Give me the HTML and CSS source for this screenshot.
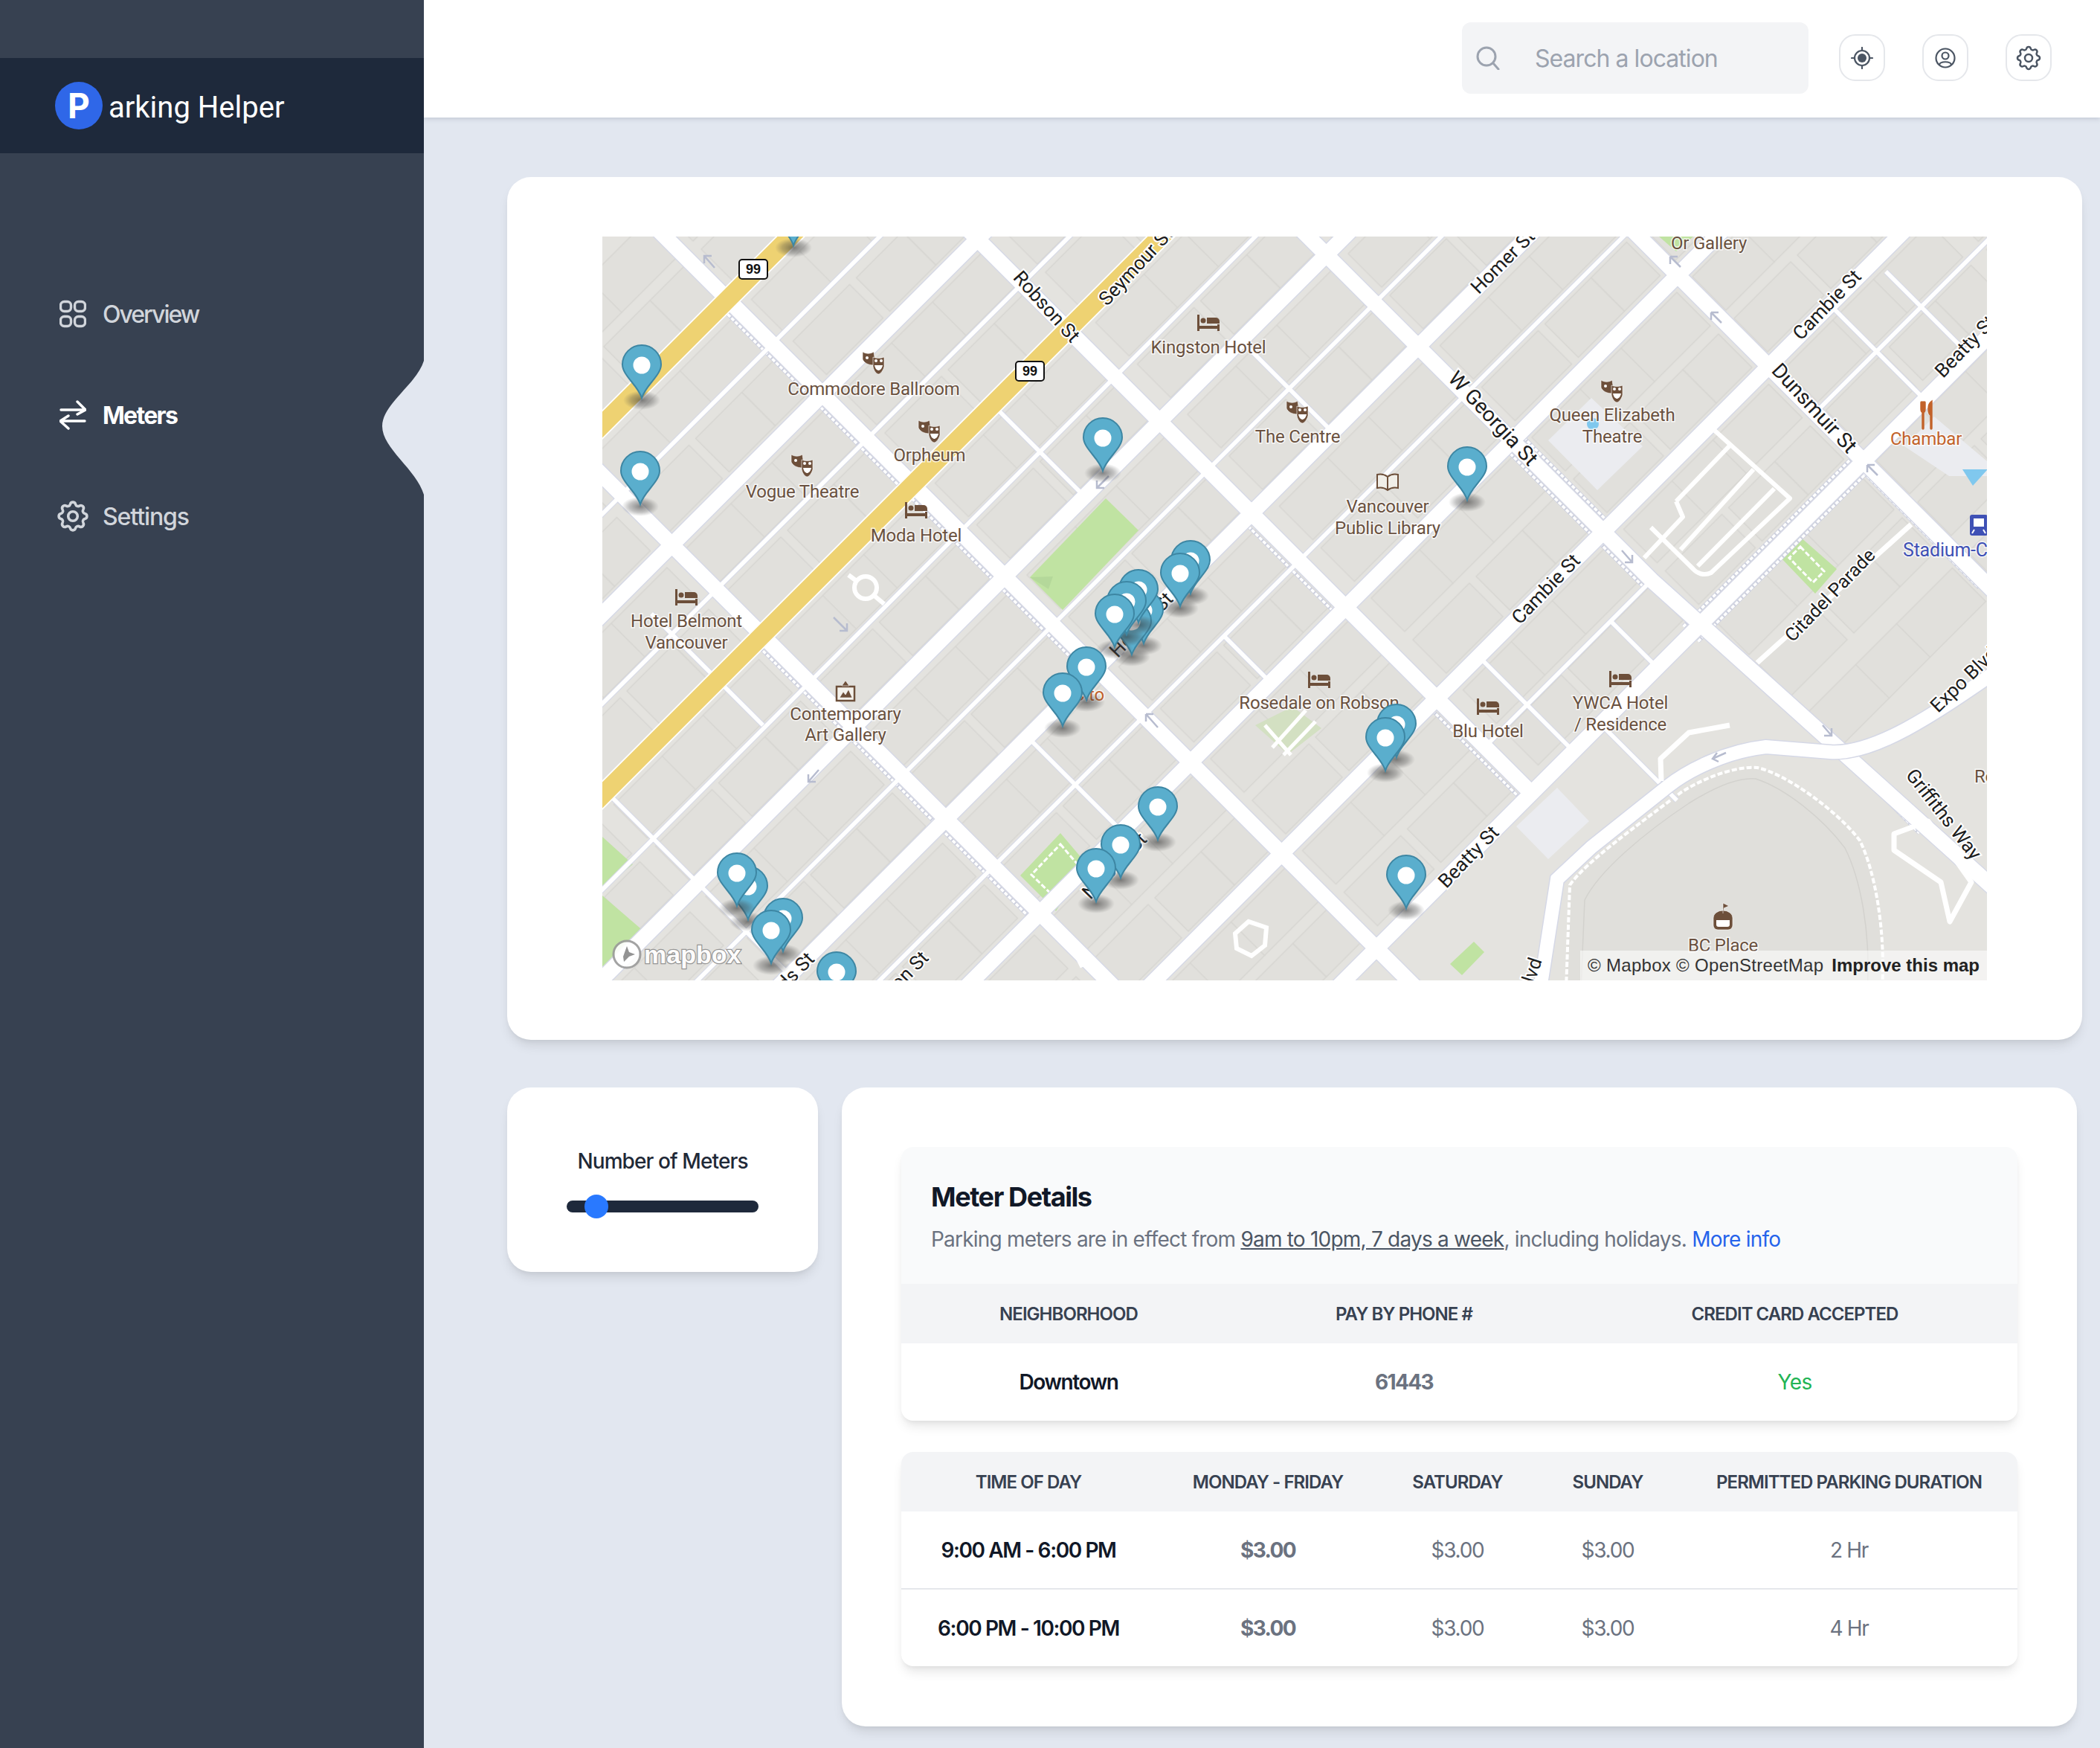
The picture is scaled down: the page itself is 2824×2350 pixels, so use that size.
FILE: index.html
```html
<!DOCTYPE html>
<html lang="en">
<head>
<meta charset="utf-8">
<title>Parking Helper</title>
<link rel="stylesheet" href="styles.css">
</head>
<body>
<div class="app">
  <aside class="sidebar">
    <div class="brand"><span class="brand-mark">P</span><span class="brand-text">arking Helper</span></div>
    <nav class="nav">
      <a class="nav-item overview">
        <svg class="nav-icon" viewBox="0 0 36 36"><rect x="1.5" y="1.5" width="14" height="13" rx="5"/><rect x="20.5" y="1.5" width="14" height="13" rx="5"/><rect x="1.5" y="21.5" width="14" height="13" rx="5"/><rect x="20.5" y="21.5" width="14" height="13" rx="5"/></svg>
        <span>Overview</span>
      </a>
      <a class="nav-item active">
        <svg class="nav-icon" viewBox="0 0 36 40"><path d="M2 13H34M24 2L35 13L24 19"/><path d="M34 28H2M12 21L1 28L12 38"/></svg>
        <span>Meters</span>
      </a>
      <a class="nav-item">
        <svg class="nav-icon gear" viewBox="0 0 24 24"><path d="M10.325 4.317c.426-1.756 2.924-1.756 3.35 0a1.724 1.724 0 002.573 1.066c1.543-.94 3.31.826 2.37 2.37a1.724 1.724 0 001.065 2.572c1.756.426 1.756 2.924 0 3.35a1.724 1.724 0 00-1.066 2.573c.94 1.543-.826 3.31-2.37 2.37a1.724 1.724 0 00-2.572 1.065c-.426 1.756-2.924 1.756-3.35 0a1.724 1.724 0 00-2.573-1.066c-1.543.94-3.31-.826-2.37-2.37a1.724 1.724 0 00-1.065-2.572c-1.756-.426-1.756-2.924 0-3.35a1.724 1.724 0 001.066-2.573c-.94-1.543.826-3.31 2.37-2.37.996.608 2.296.07 2.572-1.065z"/><circle cx="12" cy="12" r="3"/></svg>
        <span>Settings</span>
      </a>
    </nav>
    <svg class="notch" viewBox="0 0 56 180"><path d="M56 0C46 32 0 58 0 88C0 118 46 146 56 180Z"/></svg>
  </aside>

  <div class="main">
    <header class="topbar">
      <div class="search">
        <svg class="search-icon" viewBox="0 0 32 32"><circle cx="14" cy="14" r="12"/><path d="M23 23L30 31"/></svg>
        <span class="search-text">Search a location</span>
      </div>
      <button class="icon-btn">
        <svg class="top-icon" viewBox="0 0 30 30"><circle cx="15" cy="15" r="10"/><circle class="solid" cx="15" cy="15" r="6"/><path d="M15 1V5M15 25V29M1 15H5M25 15H29"/></svg>
      </button>
      <button class="icon-btn">
        <svg class="top-icon" viewBox="0 0 30 30"><circle cx="15" cy="15" r="12.5"/><circle cx="15" cy="12" r="4.5"/><path d="M7 24C8 19 22 19 23 24"/></svg>
      </button>
      <button class="icon-btn">
        <svg class="top-icon top-gear" viewBox="0 0 24 24"><path d="M10.325 4.317c.426-1.756 2.924-1.756 3.35 0a1.724 1.724 0 002.573 1.066c1.543-.94 3.31.826 2.37 2.37a1.724 1.724 0 001.065 2.572c1.756.426 1.756 2.924 0 3.35a1.724 1.724 0 00-1.066 2.573c.94 1.543-.826 3.31-2.37 2.37a1.724 1.724 0 00-2.572 1.065c-.426 1.756-2.924 1.756-3.35 0a1.724 1.724 0 00-2.573-1.066c-1.543.94-3.31-.826-2.37-2.37a1.724 1.724 0 00-1.065-2.572c-1.756-.426-1.756-2.924 0-3.35a1.724 1.724 0 001.066-2.573c-.94-1.543.826-3.31 2.37-2.37.996.608 2.296.07 2.572-1.065z"/><circle cx="12" cy="12" r="3"/></svg>
      </button>
    </header>

    <main class="content">
      <section class="card map-card">
        <div class="map">
          <svg class="map-svg" viewBox="809 318 1862 1000">
            <defs>
              <pattern id="parcels" width="247" height="432" patternUnits="userSpaceOnUse" patternTransform="translate(1635 -155)">
                <rect class="bldg" x="24" y="22" width="90" height="150"/>
                <rect class="bldg" x="24" y="172" width="90" height="110"/>
                <rect class="bldg" x="24" y="282" width="90" height="130"/>
                <rect class="bldg" x="136" y="22" width="90" height="96"/>
                <rect class="bldg" x="136" y="118" width="90" height="124"/>
                <rect class="bldg" x="136" y="260" width="90" height="152"/>
              </pattern>
              <radialGradient id="shadow"><stop offset="0" stop-color="#333" stop-opacity=".6"/><stop offset=".6" stop-color="#444" stop-opacity=".32"/><stop offset="1" stop-color="#555" stop-opacity="0"/></radialGradient>
              <g id="pin">
                <ellipse cx="0" cy="3" rx="25" ry="13" fill="url(#shadow)"/>
                <path class="pin-body" d="M0 0C-5 -17 -26 -30 -26 -45A26 26 0 0 1 26 -45C26 -30 5 -17 0 0Z"/>
                <circle class="pin-hole" cx="0" cy="-44" r="11.5"/>
              </g>
              <g id="bed"><path class="glyph-plain" d="M-15 -11h3v15h24v-2h3v9h-3v-3h-24v3h-3z"/><circle class="glyph-plain" cx="-7" cy="-3" r="3.5"/><path class="glyph-plain" d="M-2 -7h12a5 5 0 015 5v3h-17z"/></g>
              <g id="masks"><path class="glyph" d="M-15 -15c5 3 10 3 15 0l1 7-1 11c-7 0-13-3-15-8z"/><path class="glyph" d="M-1 -8c5 2 10 2 15 0v13c-2 7-6 10-7.500 10c-2 0-6-3-7.500-10z"/><circle class="glyph-hole" cx="-9" cy="-7" r="2"/><circle class="glyph-hole" cx="3" cy="-3" r="2"/><circle class="glyph-hole" cx="10" cy="-3" r="2"/><path class="glyph-hole" d="M1 3h11c-1 5-4 7-5.500 7c-2 0-4.500-2-5.500-7z"/></g>
              <g id="book"><path class="book" d="M0 -7C-5 -11 -10 -11 -14 -10V8C-10 7 -5 7 0 11C5 7 10 7 14 8V-10C10 -11 5 -11 0 -7V11"/></g>
              <g id="art"><path class="art-frame" d="M-12 -6L0 -6L12 -6V13H-12Z"/><path class="glyph" d="M-5 -7L0 -14L5 -7ZM-8 9L-3 1L0 5L4 -2L9 9Z"/></g>
              <g id="fork"><path class="fork" d="M-7 -17V-8C-7 -3 -3 -3 -3 -8V-17M-5 -17V18M6 18V-17C2 -14 2 -3 6 0"/></g>
              <g id="dome"><path class="glyph" d="M-13 -2a13 10 0 0126 0v10a6 6 0 01-6 6h-14a6 6 0 01-6-6z"/><path class="glyph" d="M0 -8V-22L8 -18L1 -15"/><path class="glyph-hole" d="M-9 1h18v6a3 3 0 01-3 3h-12a3 3 0 01-3-3z"/></g>
            </defs>

            <rect class="land" x="809" y="318" width="1862" height="1000"/>

            <g transform="matrix(.5 .5 -.5 .5 0 0)">
              <rect x="1127" y="-2353" width="2862" height="2862" fill="url(#parcels)"/>
              <rect class="land" x="3135" y="-1440" width="1000" height="1500"/>
              <rect class="land" x="3480" y="-2400" width="600" height="1100"/>
            </g>

            <polygon class="plaza" points="2139,535 2208,600 2147,659 2081,592"/>
            <polygon class="plaza" points="2093,1059 2136,1104 2081,1155 2038,1111"/>
            <polygon class="plaza" points="2560,600 2600,560 2671,620 2671,640 2620,640"/>
            <polygon class="water" points="2638,631 2672,631 2652,653"/>
            <circle class="water" cx="2141" cy="570" r="8"/>
            <polygon class="park" points="1486,670 1530,713 1428,820 1384,776"/>
            <polygon class="park-dark" points="1384,776 1415,775 1409,792"/>
            <polygon class="park" points="1425,1120 1459,1160 1419,1225 1371,1177"/>
            <polygon class="park-dash" points="1425,1135 1448,1162 1419,1208 1386,1176"/>
            <polygon class="park" points="809,1125 850,1162 809,1196"/>
            <polygon class="park" points="809,1204 867,1254 819,1305 809,1305"/>
            <polygon class="park" points="1981,1266 1995,1280 1965,1311 1949,1296"/>
            <polygon class="park" points="2420,722 2469,765 2440,798 2394,750"/>
            <polygon class="park-dash" points="2420,735 2452,768 2437,783 2405,750"/>
            <polygon class="park-fade" points="1737,950 1776,979 1731,1014 1687,975"/>
            <path class="park-stripes" d="M1755 955L1710 1005M1768 970L1725 1015M1700 975L1735 1015"/>
            <polygon class="park" points="2230,318 2276,318 2253,338"/>

            <path class="stadium" d="M2105 1330L2110 1190C2130 1160 2200 1110 2260 1065C2300 1040 2340 1030 2362 1032C2400 1040 2470 1090 2500 1130C2520 1170 2535 1250 2530 1330Z"/>
            <path class="stadium-inner" d="M2125 1330L2130 1210C2150 1170 2210 1120 2270 1080C2310 1055 2340 1045 2360 1047C2400 1060 2450 1100 2480 1140C2500 1180 2515 1250 2510 1330"/>

            <g transform="matrix(.5 .5 -.5 .5 0 0)">
              <defs>
                <path id="thin" d="M1500 -2400V600M1755 -2400V600M2005 -2400V600M2255 -2400V600M2500 -2400V600M3000 -1440V-1000M2995 -2400V-1885M1860 250H2400M1700 -50H2000M2372 -390H2625M1878 -790H2125M2125 -1210H2372M2870 -2050H3125M2900 -2170H3125M2870 -1105H3125M3125 -1178H3330M3000 -1330H3125M1127 60H1380M2500 -790H2625"/>
                <path id="major" d="M1635 -2400V600M2125 -2400V600M2372 -2400V600M2625 -2400V600M2870 -2400V600M3125 -2400V600M1000 -170H4000M1000 -575H4000M1000 -992H3125M1000 -1440H3000L3950 -1490M1000 -1885H3560"/>
                <path id="hwy" d="M1380 -2400V600M1878 -2400V600"/>
                <path id="walk" d="M1400 -555H1630M1640 -555H1870M1885 -555H2110M2130 -555H2360M2640 -1420H2860M2880 -1420H3000M2385 -970H2615M2880 -970H3115M1890 -150H2115M2135 -150H2360M2380 -150H2610M2145 -1870H2360M3140 -1870H3450M3135 -1460H3700M2863 -1460H2640M3105 -1420V-1900M3145 -1420V-1900"/>
              </defs>
              <use href="#walk" class="walk-case"/>
              <use href="#walk" class="walk"/>
              <use href="#thin" class="thin-case"/>
              <use href="#major" class="major-case"/>
              <use href="#thin" class="thin-fill"/>
              <use href="#major" class="major-fill"/>
              <use href="#hwy" class="hwy-case"/>
              <use href="#hwy" class="hwy-fill"/>
            </g>

            <path class="curve-case" d="M2070 1330L2093 1182L2139 1139L2242 1057C2270 1035 2320 1010 2374 1004L2460 1011C2520 1015 2600 960 2680 905"/>
            <path class="curve" d="M2070 1330L2093 1182L2139 1139L2242 1057C2270 1035 2320 1010 2374 1004L2460 1011C2520 1015 2600 960 2680 905"/>
            <path class="thin-xy" d="M2362 891L2569 705M2546 1121L2592 1104L2650 1186L2621 1239L2609 1186L2546 1143ZM2233 1050L2232 1020L2270 985L2325 975M1440 1270L1455 1300"/>
            <path class="thin-xy lots" d="M2305 579L2406 670L2300 770C2290 775 2280 770 2276 765L2219 709M2253 674L2328 596M2253 674L2262 695L2210 750M2259 739L2357 631M2282 761L2385 657"/>
            <path class="ring" d="M1660 1255l18-16 24 8-2 24-18 14-20-10zM1148 790a15 15 0 1030 0a15 15 0 10-30 0zM1140 773l12 9M1176 802l12 10"/>
            <g class="arrows">
              <path d="M1120 830l18 18m-10 0h10v-10"/><path d="M1490 640l-16 16m0-10v10h10"/>
              <path d="M1100 1035l-14 16m0-10v10h10"/><path d="M1540 960l16 18m-16-18h10m-10 0v10"/>
              <path d="M2245 345l14 14m-14-14h10m-10 0v10"/><path d="M2300 420l14 14m-14-14h10m-10 0v10"/>
              <path d="M2510 625l14 14m-14-14h10m-10 0v10"/><path d="M2180 740l14 16m0-10v10h-10"/>
              <path d="M2450 975l12 14m0-10v10h-10"/><path d="M2320 1012l-18 8m6-8l-6 8l8 4"/>
              <path d="M960 360l-14-16m0 10v-10h10"/>
            </g>

            <g class="labels">
              <text x="1174" y="531">Commodore Ballroom</text><use href="#masks" x="1174" y="488"/>
              <text x="1624" y="475">Kingston Hotel</text><use href="#bed" x="1624" y="434"/>
              <text x="1744" y="595">The Centre</text><use href="#masks" x="1744" y="554"/>
              <text x="1249" y="620">Orpheum</text><use href="#masks" x="1249" y="580"/>
              <text x="1078" y="669">Vogue Theatre</text><use href="#masks" x="1078" y="626"/>
              <text x="1231" y="728">Moda Hotel</text><use href="#bed" x="1231" y="686"/>
              <text x="922" y="843">Hotel Belmont</text><text x="922" y="872">Vancouver</text><use href="#bed" x="922" y="803"/>
              <text x="1136" y="968">Contemporary</text><text x="1136" y="996">Art Gallery</text><use href="#art" x="1136" y="929"/>
              <text x="1773" y="953">Rosedale on Robson</text><use href="#bed" x="1773" y="914"/>
              <text x="1865" y="689">Vancouver</text><text x="1865" y="718">Public Library</text><use href="#book" x="1865" y="648"/>
              <text x="2167" y="566">Queen Elizabeth</text><text x="2167" y="595">Theatre</text><use href="#masks" x="2167" y="526"/>
              <text class="food" x="2589" y="598">Chambar</text><use href="#fork" x="2590" y="558"/>
              <text class="transit" x="2558" y="748">Stadium-Chambar</text>
              <text x="2178" y="953">YWCA Hotel</text><text x="2178" y="982">/ Residence</text><use href="#bed" x="2178" y="913"/>
              <text x="2000" y="991">Blu Hotel</text><use href="#bed" x="2000" y="950"/>
              <text x="2316" y="1279">BC Place</text><use href="#dome" x="2316" y="1236"/>
              <text x="2297" y="335">Or Gallery</text>
              <text class="start" x="2654" y="1052">Rogers</text>
              <text class="food" x="1463" y="942">Cito</text>
            </g>
            <rect class="train" x="2648" y="692" width="24" height="28" rx="3"/>
            <path class="train-mark" d="M2654 698h12v9h-12zM2654 712l-3 5M2666 712l3 5"/>

            <g class="streets">
              <text transform="translate(1400 418) rotate(48)">Robson St</text>
              <text transform="translate(1533 364) rotate(-47)">Seymour St</text>
              <text transform="translate(2026 358) rotate(-45)">Homer St</text>
              <text class="wide" transform="translate(2000 569) rotate(47)">W Georgia St</text>
              <text transform="translate(2462 416) rotate(-46)">Cambie St</text>
              <text transform="translate(2084 798) rotate(-46)">Cambie St</text>
              <text class="wide" transform="translate(2432 555) rotate(47)">Dunsmuir St</text>
              <text transform="translate(2648 472) rotate(-46)">Beatty St</text>
              <text transform="translate(1980 1158) rotate(-46)">Beatty St</text>
              <text class="narrow" transform="translate(2466 806) rotate(-46)">Citadel Parade</text>
              <text transform="translate(2646 920) rotate(-44)">Expo Blvd</text>
              <text transform="translate(2606 1100) rotate(52)">Griffiths Way</text>
              <text transform="translate(1540 846) rotate(-46)">Homer St</text>
              <text transform="translate(1504 1170) rotate(-46)">Nelson St</text>
              <text transform="translate(1050 1338) rotate(-46)">Richards St</text>
              <text transform="translate(1202 1338) rotate(-46)">Hamilton St</text>
              <text transform="translate(2052 1355) rotate(-72)">Pacific Blvd</text>
            </g>

            <g class="shields">
              <rect x="993" y="349" width="38" height="26" rx="4"/><text x="1012" y="368">99</text>
              <rect x="1365" y="486" width="38" height="26" rx="4"/><text x="1384" y="505">99</text>
            </g>

            <g class="pins">
              <use href="#pin" x="1066" y="330"/>
              <use href="#pin" x="862" y="535"/>
              <use href="#pin" x="860" y="678"/>
              <use href="#pin" x="1482" y="633"/>
              <use href="#pin" x="1972" y="672"/>
              <use href="#pin" x="1600" y="798"/>
              <use href="#pin" x="1586" y="815"/>
              <use href="#pin" x="1537" y="865"/>
              <use href="#pin" x="1521" y="880"/>
              <use href="#pin" x="1530" y="837"/>
              <use href="#pin" x="1514" y="853"/>
              <use href="#pin" x="1498" y="870"/>
              <use href="#pin" x="1460" y="941"/>
              <use href="#pin" x="1428" y="976"/>
              <use href="#pin" x="1877" y="1018"/>
              <use href="#pin" x="1862" y="1036"/>
              <use href="#pin" x="1556" y="1129"/>
              <use href="#pin" x="1506" y="1180"/>
              <use href="#pin" x="1473" y="1212"/>
              <use href="#pin" x="1890" y="1221"/>
              <use href="#pin" x="1005" y="1236"/>
              <use href="#pin" x="990" y="1218"/>
              <use href="#pin" x="1052" y="1279"/>
              <use href="#pin" x="1036" y="1295"/>
              <use href="#pin" x="1124" y="1351"/>
            </g>
          </svg>
          <div class="mapbox-logo"><svg class="mapbox-mark" viewBox="0 0 42 42"><circle cx="21" cy="21" r="18"/><path d="M21 10L24 18L32 21L24 24L17 31L16 24Z"/></svg><span>mapbox</span></div>
          <div class="attrib"><span>© Mapbox © OpenStreetMap</span><strong>Improve this map</strong></div>
        </div>
      </section>

      <div class="lower">
        <section class="card meter-count">
          <div class="count-label">Number of Meters</div>
          <div class="slider"><span class="thumb"></span></div>
        </section>

        <section class="card details">
          <div class="table-card">
            <div class="table-head">
              <h2>Meter Details</h2>
              <p>Parking meters are in effect from <u>9am to 10pm, 7 days a week</u>, including holidays. <a>More info</a></p>
            </div>
            <table class="t1">
              <thead><tr><th>Neighborhood</th><th>Pay by Phone #</th><th>Credit Card Accepted</th></tr></thead>
              <tbody><tr><td class="strong">Downtown</td><td class="bold">61443</td><td class="yes">Yes</td></tr></tbody>
            </table>
          </div>
          <div class="table-card">
            <table class="t2">
              <thead><tr><th>Time of Day</th><th>Monday - Friday</th><th>Saturday</th><th>Sunday</th><th>Permitted Parking Duration</th></tr></thead>
              <tbody>
                <tr><td class="strong">9:00 AM - 6:00 PM</td><td class="bold">$3.00</td><td>$3.00</td><td>$3.00</td><td>2 Hr</td></tr>
                <tr><td class="strong">6:00 PM - 10:00 PM</td><td class="bold">$3.00</td><td>$3.00</td><td>$3.00</td><td>4 Hr</td></tr>
              </tbody>
            </table>
          </div>
        </section>
      </div>
    </main>
  </div>
</div>
</body>
</html>
```

FILE: styles.css
```css
* { box-sizing: border-box; }
html, body { margin: 0; padding: 0; }
body { font-family: Inter, "Liberation Sans", sans-serif; background: #e2e7f0; color: #111827; }
.app { display: flex; width: 2824px; min-height: 2350px; }

/* Sidebar */
.sidebar { position: relative; width: 570px; flex: none; background: #374151; padding-top: 78px; }
.brand { height: 128px; background: #1e293b; display: flex; align-items: center; padding-left: 74px; gap: 8px; }
.brand-mark { width: 64px; height: 64px; border-radius: 50%; background: #2f67e8; color: #fff; font-weight: 700; font-size: 46px; display: flex; align-items: center; justify-content: center; }
.brand-text { color: #fff; font-size: 40px; font-family: Roboto, Inter, sans-serif; position: relative; top: 2px; }
.nav { margin-top: 148px; }
.nav-item { height: 136px; display: flex; align-items: center; padding-left: 80px; gap: 22px; color: #d1d5db; font-size: 32px; font-weight: 500; letter-spacing: -1.1px; }
.nav-item.overview { letter-spacing: -2px; }
.nav-item.active { color: #fff; font-weight: 700; letter-spacing: -1.7px; }
.nav-icon { width: 36px; height: 40px; fill: none; stroke: currentColor; stroke-width: 3.4; stroke-linecap: round; stroke-linejoin: round; }
.nav-icon.gear { stroke-width: 1.7; transform: scale(1.4); }
.notch { position: absolute; right: 0; top: 485px; width: 56px; height: 180px; fill: #e2e7f0; }

/* Top bar */
.main { flex: 1; min-width: 0; }
.topbar { height: 158px; background: #fff; box-shadow: 0 2px 6px rgba(100, 110, 130, .25); display: flex; justify-content: flex-end; padding: 30px 65px 0 0; }
.search { width: 466px; height: 96px; background: #f3f4f6; border-radius: 12px; display: flex; align-items: center; padding-left: 19px; margin-right: 41px; }
.search-icon { width: 32px; height: 32px; fill: none; stroke: #9ca3af; stroke-width: 3; stroke-linecap: round; }
.search-text { color: #9ca3af; font-size: 32px; margin-left: 47px; letter-spacing: -.95px; }
.icon-btn { width: 62px; height: 63px; margin: 16px 0 0 0; padding: 0; background: #fff; border: 2px solid #e5e7eb; border-radius: 22px; display: flex; align-items: center; justify-content: center; }
.icon-btn + .icon-btn { margin-left: 50px; }
.top-icon { width: 30px; height: 30px; fill: none; stroke: #4b5563; stroke-width: 2.2; stroke-linecap: round; stroke-linejoin: round; }
.top-icon .solid { fill: #4b5563; stroke: none; }
.top-icon.top-gear { width: 40px; height: 40px; stroke-width: 1.5; }

/* Cards */
.content { padding: 80px 24px 0 112px; }
.card { background: #fff; border-radius: 32px; box-shadow: 0 10px 15px -3px rgba(0, 0, 0, .1), 0 4px 6px -2px rgba(0, 0, 0, .05); }
.map-card { height: 1160px; padding: 80px 128px; }
.map { position: relative; width: 1862px; height: 1000px; overflow: hidden; }
.map-svg { display: block; width: 1862px; height: 1000px; }
.lower { display: flex; align-items: flex-start; gap: 32px; margin-top: 64px; padding-right: 7px; }
.meter-count { width: 418px; height: 248px; padding-top: 80px; display: flex; flex-direction: column; align-items: center; }
.count-label { font-size: 28px; font-weight: 500; color: #1f2937; line-height: 38px; letter-spacing: -.9px; }
.slider { position: relative; width: 258px; height: 16px; border-radius: 8px; background: #1e293b; margin-top: 34px; }
.thumb { position: absolute; left: 24px; top: -8px; width: 32px; height: 32px; border-radius: 50%; background: #2979ff; }
.details { flex: 1; min-width: 0; padding: 80px 80px 81px; display: flex; flex-direction: column; gap: 42px; }
.table-card { background: #fff; border-radius: 16px; box-shadow: 0 10px 15px -3px rgba(0, 0, 0, .1), 0 4px 6px -2px rgba(0, 0, 0, .05); overflow: hidden; }
.table-head { height: 184px; background: #f9fafb; padding: 43px 40px 0; }
.table-head h2 { margin: 0; font-size: 36px; font-weight: 700; color: #111827; line-height: 48px; letter-spacing: -1.4px; }
.table-head p { margin: 13px 0 0; font-size: 28px; color: #6b7280; line-height: 40px; letter-spacing: -.78px; }
.table-head u { color: #4b5563; }
.table-head a { color: #2563eb; }
table { width: 100%; border-collapse: collapse; table-layout: fixed; }
th { height: 80px; background: #f3f4f6; padding: 0; font-size: 24px; font-weight: 600; color: #374151; text-transform: uppercase; text-align: center; letter-spacing: -.95px; }
td { height: 104px; padding: 0; font-size: 28px; color: #6b7280; text-align: center; letter-spacing: -1.300px; }
.t2 tbody tr + tr td { border-top: 2px solid #e5e7eb; }
td.strong { color: #111827; font-weight: 600; letter-spacing: -1.4px; }
td.bold { font-weight: 700; letter-spacing: -1.6px; }
td.yes { color: #22b455; letter-spacing: -.6px; }
.t1 th:nth-child(1) { width: 450px; }
.t1 th:nth-child(2) { width: 452px; }
.t2 th:nth-child(1) { width: 342px; }
.t2 th:nth-child(2) { width: 302px; }
.t2 th:nth-child(3) { width: 208px; }
.t2 th:nth-child(4) { width: 196px; }

/* Map drawing */
.land { fill: #e4e3df; }
.bldg { fill: #e1e0dc; stroke: #d6d5d1; stroke-width: 2; }
.plaza { fill: #ebecf0; }
.water { fill: #80c8ee; }
.park { fill: #c0e3a2; }
.park-dark { fill: #b4d89a; }
.park-fade { fill: #d3e0c2; }
.park-dash { fill: none; stroke: #fff; stroke-width: 3; stroke-dasharray: 7 3; }
.park-stripes { fill: none; stroke: #fff; stroke-width: 5; }
.stadium { fill: #e0dfdb; stroke: #fff; stroke-width: 4; stroke-dasharray: 7 3; }
.stadium-inner { fill: none; stroke: #d3d2ce; stroke-width: 1.5; }
.major-case, .major-fill, .thin-case, .thin-fill, .hwy-case, .hwy-fill, .walk-case, .walk { fill: none; }
.major-case { stroke: #d5d8e6; stroke-width: 33; }
.major-fill { stroke: #fff; stroke-width: 29; }
.thin-case { stroke: #d5d8e6; stroke-width: 11; }
.thin-fill { stroke: #fff; stroke-width: 8; }
.hwy-case { stroke: #fff; stroke-width: 40; }
.hwy-fill { stroke: #eed272; stroke-width: 35; }
.walk-case { stroke: #cdd0de; stroke-width: 7; }
.walk { stroke: #fff; stroke-width: 5; stroke-dasharray: 7 3; }
.curve-case { fill: none; stroke: #d5d8e6; stroke-width: 21; }
.curve { fill: none; stroke: #fff; stroke-width: 18; }
.thin-xy { fill: none; stroke: #fff; stroke-width: 7; stroke-linejoin: round; }
.thin-xy.lots { stroke-width: 6; }
.ring { fill: none; stroke: #fff; stroke-width: 6; }
.arrows path { fill: none; stroke: #b7bccf; stroke-width: 2.5; }
.labels text { font-family: Roboto, "Liberation Sans", sans-serif; font-size: 24px; fill: #6a5140; text-anchor: middle; paint-order: stroke; stroke: rgba(255, 255, 255, .75); stroke-width: 3px; letter-spacing: -.2px; }
.labels .food { fill: #c2622a; }
.labels .transit { fill: #3f51b5; text-anchor: start; font-size: 25px; }
.labels .start { text-anchor: start; }
.glyph { fill: #6d4f3a; stroke: #fff; stroke-width: .6; }
.glyph-plain { fill: #6d4f3a; }
.glyph-hole { fill: #fff; }
.book { fill: #f0eee8; stroke: #6d4f3a; stroke-width: 2; }
.art-frame { fill: #f4f2ec; stroke: #6d4f3a; stroke-width: 2.500; }
.fork { fill: none; stroke: #c2622a; stroke-width: 3.400; stroke-linecap: round; }
.train { fill: #3f51b5; }
.train-mark { fill: #fff; stroke: #fff; stroke-width: 2; }
.streets text { font-family: Roboto, "Liberation Sans", sans-serif; font-size: 26px; fill: #1d1d1d; text-anchor: middle; paint-order: stroke; stroke: #fff; stroke-width: 4px; }
.streets .wide { font-size: 28px; }
.streets .narrow { font-size: 25px; }
.shields rect { fill: #fff; stroke: #111; stroke-width: 2; }
.shields text { font-family: "Liberation Sans", sans-serif; font-weight: 700; font-size: 18px; text-anchor: middle; fill: #111; }
.pin-body { fill: #5aaecd; stroke: #3d86a3; stroke-width: 2; }
.pin-hole { fill: #fff; }

/* Map overlays */
.mapbox-logo { position: absolute; left: 12px; bottom: 13px; display: flex; align-items: center; gap: 2px; color: #fff; font-family: "Liberation Sans", sans-serif; font-weight: 700; font-size: 34px; line-height: 44px; -webkit-text-stroke: 2.500px #8d8d8d; opacity: .9; }
.mapbox-logo span { paint-order: stroke; }
.mapbox-mark { width: 42px; height: 42px; fill: #fff; stroke: #9a9a9a; stroke-width: 3; }
.mapbox-mark path { fill: #888; stroke: none; }
.attrib { position: absolute; right: 0; bottom: 0; height: 40px; width: 547px; padding: 0 10px; display: flex; align-items: center; justify-content: space-between; background: rgba(255, 255, 255, .55); font-family: "Liberation Sans", sans-serif; font-size: 24px; color: #333; }
.attrib span { letter-spacing: .3px; }
.attrib strong { color: #222; }
```
